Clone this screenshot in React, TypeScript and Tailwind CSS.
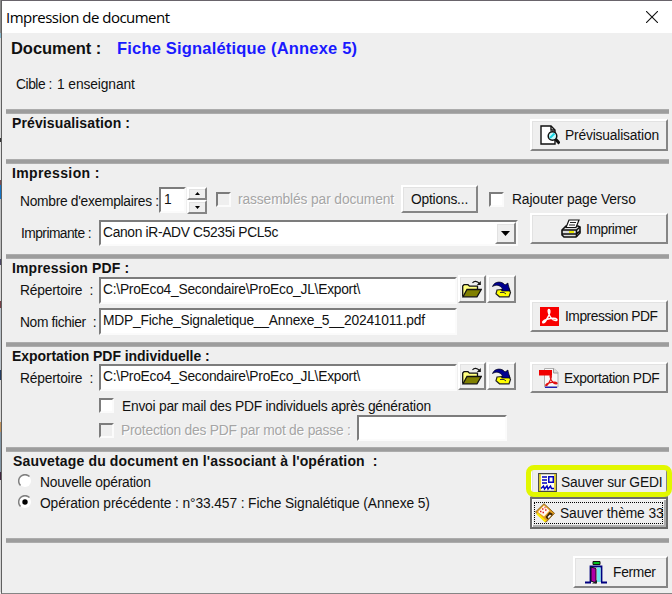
import type { ReactNode } from 'react';
import clsx from 'clsx';

const RAISED = 'border-2 border-t-white border-l-white border-r-[#858585] border-b-[#858585] bg-[#efefef] shadow-[inset_1px_1px_0_#e2e2e2]';
const SUNKEN = 'border-2 border-t-[#7c7c7c] border-l-[#7c7c7c] border-r-[#fbfbfb] border-b-[#fbfbfb]';

const PreviewIcon = () => (
    <svg className="h-5 w-5 shrink-0" viewBox="0 0 20 20">
        <path d="M1 1h10l4 4v14H1z" fill="#fff" stroke="#111" strokeWidth="1.4" />
        <path d="M11 1v4h4" fill="none" stroke="#111" strokeWidth="1.4" />
        <circle cx="12.500" cy="11" r="4.300" fill="#c8f8fa" stroke="#111" strokeWidth="1.500" />
        <path d="M10 13l4.500-4.500" stroke="#19d5e2" strokeWidth="2" />
        <path d="M15.500 14l4 4.500" stroke="#111" strokeWidth="3" />
    </svg>
);

const PrinterIcon = () => (
    <svg className="h-[19px] w-5 shrink-0" viewBox="0 0 20 19">
        <path d="M1 11l4-4h12l2 1v6L15 18H3l-2-2z" fill="#ddd" stroke="#111" strokeWidth="1.600" />
        <path d="M5 8.500L8 1h10l-3 7.500z" fill="#fff" stroke="#111" strokeWidth="1.200" />
        <path d="M9 3.500h6M8 6h6" stroke="#222" />
        <path d="M1 11h14.500l3.500-3M1 15h14.500l3.500-3M15.500 11v7" fill="none" stroke="#111" strokeWidth="1.600" />
        <path d="M8 13h5" stroke="#e8e800" strokeWidth="2" />
    </svg>
);

const AcrobatSwirl = ({ color }: { color: string }) => (
    <path
        d="M9 2.500c-1.500 0-.6 4 .8 6.500 1.600 2.900 4 4.600 6.200 4.500 2-.2.8-2.200-2.500-2.200-4 0-9.500 1.500-10.600 3.400-.7 1.400 1.200 1.700 2.700-.7C7.400 11.200 10.200 5.500 9.800 3.600 9.600 2.800 9.400 2.500 9 2.500z"
        fill="none"
        stroke={color}
        strokeWidth="1.500"
    />
);

const AcrobatIcon = () => (
    <svg className="h-[19px] w-[19px] shrink-0" viewBox="0 0 19 19">
        <path d="M0 0h19v19H0z" fill="#f80000" />
        <AcrobatSwirl color="#fff" />
    </svg>
);

const PdfFileIcon = () => (
    <svg className="h-5 w-5 shrink-0" viewBox="0 0 20 20">
        <path d="M5.500.5h9.500l4 4V19H5.500z" fill="#f8f8f8" stroke="#b0b0b0" />
        <path d="M14.500.5V5H19" fill="#ddd" stroke="#999" />
        <g transform="translate(4.500 5) scale(.8)">
            <AcrobatSwirl color="#e01010" />
        </g>
        <path d="M0 2h13v5.500H0z" fill="#f00000" />
        <path d="M6 19.300h12" stroke="#2020b0" strokeWidth="1.400" />
    </svg>
);

const FolderIcon = () => (
    <svg className="h-[18px] w-5" viewBox="0 0 20 18">
        <path d="M.7 16.500V6L2 4.700h4L7.500 6.200h8V9" fill="#ffff80" stroke="#111" strokeWidth="1.300" />
        <path d="M1 16.800L5 9.500h14.300L15 16.800z" fill="#808000" stroke="#111" strokeWidth="1.300" />
        <path d="M10.500 3C12 .8 15 .8 17.500 3.500" fill="none" stroke="#111" strokeWidth="1.200" />
        <path d="M18.800 1v4h-4z" fill="#111" />
    </svg>
);

const DefaultFolderIcon = () => (
    <svg className="h-[18px] w-5" viewBox="0 0 20 18">
        <path d="M5 10l12-1 1.500 3.500-1.500 4.300H7.500l-3.500-3z" fill="#ffff00" stroke="#222" strokeWidth="1.200" />
        <path d="M.5 6.500C2.500 1 10 .8 13 5l3-2v1l2 7H9.500L10.500 9C8 4.600 4 4.500.5 6.500z" fill="#000090" stroke="#001" strokeWidth=".7" />
        <path d="M8 12.500h4l2 1.500" fill="none" stroke="#333" />
    </svg>
);

const GediIcon = () => (
    <svg className="h-[19px] w-[19px] shrink-0" viewBox="0 0 19 19">
        <path d="M.7.7h17.600V18.300H.7z" fill="#fffff0" stroke="#444" strokeWidth="1.300" />
        <path d="M2 1v17M17 1v17" stroke="#e0c800" strokeWidth="1.500" />
        <path d="M4 4h5M4 7h5M4 10h5" stroke="#0000c0" strokeWidth="1.600" />
        <path d="M10.800 3.700h4.500v5.600h-4.500z" fill="none" stroke="#0000c0" strokeWidth="1.500" />
        <path d="M3 15.500l2.500-2.500 1 3 2.500-3 1 3 2.500-3 1 2.500h2.500" fill="none" stroke="#0000c0" strokeWidth="1.400" />
    </svg>
);

const DisketteIcon = () => (
    <svg className="h-5 w-5 shrink-0" viewBox="0 0 20 20">
        <path d="M.5 9L9 .7l10.500 9.600-8.500 9z" fill="#e8a020" stroke="#8b6420" />
        <path d="M3 9L9 2.500l5.500 5L9 13.500z" fill="#fff8f0" />
        <path d="M5 8.500h1.500m.5-2.500h1.500m1-1.500h1m-3 5h1.500m1-2.500h1.500" stroke="#e02020" strokeWidth="1.500" />
        <path d="M10.500 14l4-5 3.500 2-5.500 5.500z" fill="#3a2408" />
        <path d="M12.500 14l2.500-2.500 1.200 1-2.500 2.700z" fill="#f8f8f8" />
        <path d="M2 10.500l8.500 8" stroke="#ffee00" strokeWidth="2" />
    </svg>
);

const DoorIcon = () => (
    <svg className="h-[23px] w-[22px] shrink-0" viewBox="0 0 22 23">
        <path d="M8 .5h7v3H8z" fill="#00c020" stroke="#111" />
        <path d="M5.500 21V5.500h11V21" fill="#fff" stroke="#000080" strokeWidth="1.800" />
        <path d="M12 6.500h3.500V21H12z" fill="#70e8f0" />
        <path d="M6 6l5 1.500V22L6 20z" fill="#b000a8" stroke="#111" />
        <path d="M0 21.500h6M16 21.500h6" stroke="#000080" strokeWidth="2" />
        <path d="M7 22.500l5-3.500v3.500z" fill="#222" />
    </svg>
);

const Text = ({ className, children }: { className?: string; children: ReactNode }) => (
    <span className={clsx('block h-4 shrink-0 whitespace-pre pt-px text-[13.800px] leading-4', className)}>{children}</span>
);

const PushButton = ({ className, icon, children }: { className?: string; icon?: ReactNode; children: ReactNode }) => (
    <button className={clsx('flex shrink-0 items-center overflow-hidden', RAISED, className)}>
        {icon}
        {children}
    </button>
);

const Check = ({ className, disabled }: { className?: string; disabled?: boolean }) => (
    <span className={clsx('block h-[15px] w-[15px] shrink-0', SUNKEN, disabled ? 'bg-[#efefef]' : 'bg-white', className)} />
);

const Radio = ({ checked }: { checked?: boolean }) => (
    <svg className="h-[14px] w-[14px] shrink-0" viewBox="0 0 14 14">
        <circle cx="7" cy="7" r="6" fill="#fff" />
        <path d="M2.500 11.500A6.200 6.200 0 0 1 11.500 2.500" fill="none" stroke="#808080" strokeWidth="1.500" />
        {checked && <circle cx="7" cy="7" r="2.700" fill="#000" />}
    </svg>
);

const Field = ({ className, children }: { className?: string; children?: ReactNode }) => (
    <div className={clsx('flex h-[27px] shrink-0 bg-white', SUNKEN, className)}>{children}</div>
);

const FolderButtons = () => (
    <div className="ml-px flex gap-px">
        <button className={clsx('flex h-[28px] w-[28px] items-center justify-center', RAISED)}><FolderIcon /></button>
        <button className={clsx('flex h-[28px] w-[29px] items-center justify-center', RAISED)}><DefaultFolderIcon /></button>
    </div>
);

const Divider = () => <div className="ml-1 mr-[3px] h-[5px] shrink-0 border-y border-[#acacac] bg-[#9d9d9d]" />;

const Heading = ({ className, children }: { className?: string; children: ReactNode }) => (
    <h2 className={clsx('ml-[10px] whitespace-pre text-[14px] font-bold leading-4', className)}>{children}</h2>
);

const EDGE = [
    'h-[33px] bg-[#8a8a8a]', 'h-[5px] bg-[#86b6cc]', 'h-[100px] bg-[#d8d8d8]', 'h-[4px] bg-[#333]', 'h-[38px] bg-[#e2e2e2]',
    'h-[5px] bg-[#7a4c50]', 'h-[14px] bg-[#1674c4]', 'h-[60px] bg-[#bdbdbd]', 'h-[6px] bg-[#4e4966]', 'h-[36px] bg-[#d8d8d8]',
    'h-[7px] bg-[#743f45]', 'h-[62px] bg-[#b9c1c8]', 'h-[10px] bg-[#243d62]', 'h-[42px] bg-[#d8d8d8]', 'h-[10px] bg-[#c0925c]',
    'h-[40px] bg-[#8296a5]', 'h-[8px] bg-[#40263f]', 'h-[112px] bg-[#d5d5d5]',
];

const App = () => (
    <div className="flex h-[594px] w-[672px] overflow-hidden bg-[#efefef] font-['Liberation_Sans',Arial,sans-serif] text-[#111]">
        <div className="flex w-px shrink-0 flex-col">
            {EDGE.map((item, index) => <div key={index} className={clsx('shrink-0', item)} />)}
        </div>
        <div className="flex w-[671px] shrink-0 flex-col border-b border-l border-t border-b-[#858585] border-l-[#606060] border-t-[#69646b]">
            <header className="flex h-[32px] shrink-0 items-center bg-white pl-[4px]">
                <span className="-mt-px whitespace-nowrap font-['Open_Sans','Noto_Sans',sans-serif] text-[15px] leading-5 tracking-[-0.520px] text-black">Impression de document</span>
                <svg className="ml-auto mr-[14px] h-3 w-3" viewBox="0 0 12 12">
                    <path d="M0 0l12 12M12 0L0 12" stroke="#111" strokeWidth="1.100" />
                </svg>
            </header>

            <section className="h-[76px] shrink-0 pl-[9px] pt-[5px]">
                <div className="flex text-[16.500px] font-bold leading-5">
                    <span className="w-[106px] whitespace-pre tracking-[-0.050px]">Document :</span>
                    <span className="whitespace-pre tracking-[0.190px] text-[#1a1aff]">Fiche Signalétique (Annexe 5)</span>
                </div>
                <div className="mt-[18px] flex pl-[5px]">
                    <Text className="w-[41px] tracking-[-0.450px]">Cible :</Text>
                    <Text className="tracking-[-0.100px]">1 enseignant</Text>
                </div>
            </section>

            <Divider />
            <section className="flex h-[45px] shrink-0">
                <Heading className="w-[518px] pt-px tracking-[0.120px]">Prévisualisation :</Heading>
                <PushButton className="mt-[5px] h-[32px] w-[138px] pl-2" icon={<PreviewIcon />}>
                    <Text className="ml-[5px] tracking-[-0.170px]">Prévisualisation</Text>
                </PushButton>
            </section>

            <Divider />
            <section className="h-[90px] shrink-0">
                <Heading className="h-[21px] pt-px tracking-[0.380px]">Impression :</Heading>
                <div className="flex h-[28px]">
                    <Text className="ml-[18px] mt-2 w-[139px] tracking-[-0.290px]">Nombre d'exemplaires :</Text>
                    <Field className="h-[26px]! mt-[2px] w-[27px]"><Text className="ml-[3px] mt-[2px]">1</Text></Field>
                    <div className="ml-[1px] mt-[2px] w-[20px]">
                        <div className={clsx('flex h-[13px] items-center justify-center', RAISED)}>
                            <svg className="h-[3px] w-[5px]" viewBox="0 0 5 3"><path d="M0 3L2.500 0 5 3z" /></svg>
                        </div>
                        <div className={clsx('flex h-[14px] items-center justify-center', RAISED)}>
                            <svg className="h-[3px] w-[5px]" viewBox="0 0 5 3"><path d="M0 0l2.500 3L5 0z" /></svg>
                        </div>
                    </div>
                    <Check className="ml-[9px] mt-[7px]" disabled />
                    <Text className="ml-[7px] mt-[6px] w-[163px] tracking-[-0.120px] text-[#a5a5a5] text-shadow-[1px_1px_0_#fff]">rassemblés par document</Text>
                    <PushButton className="h-[28px] w-[77px] justify-center"><Text className="tracking-[-0.200px]">Options...</Text></PushButton>
                    <Check className="ml-[11px] mt-[7px]" />
                    <Text className="ml-[8px] mt-[6px] tracking-[-0.110px]">Rajouter page Verso</Text>
                </div>
                <div className="flex">
                    <Text className="ml-[19px] mt-[12px] w-[78px] tracking-[-0.550px]">Imprimante :</Text>
                    <Field className="h-[26px]! mt-[7px] w-[419px]">
                        <Text className="ml-[2px] mt-[2px] grow tracking-[-0.330px]">Canon iR-ADV C5235i PCL5c</Text>
                        <div className={clsx('flex w-[21px] items-center justify-center', RAISED)}>
                            <svg className="h-[5px] w-[9px]" viewBox="0 0 9 5"><path d="M0 0h9L4.500 5z" /></svg>
                        </div>
                    </Field>
                    <PushButton className="ml-[12px] h-[31px] w-[138px] pl-[29px]" icon={<PrinterIcon />}>
                        <Text className="ml-[5px] tracking-[-0.450px]">Imprimer</Text>
                    </PushButton>
                </div>
            </section>

            <Divider />
            <section className="flex h-[83px] shrink-0">
                <div className="w-[528px] shrink-0">
                    <Heading className="h-[16px] pt-px tracking-[0.130px]">Impression PDF :</Heading>
                    <div className="flex">
                        <Text className="ml-[18px] mt-[7px] w-[79px] tracking-[-0.210px]">Répertoire  :</Text>
                        <Field className="mt-[2px] w-[358px]"><Text className="ml-[2px] mt-[2px] tracking-[-0.250px]">C:\ProEco4_Secondaire\ProEco_JL\Export\</Text></Field>
                        <FolderButtons />
                    </div>
                    <div className="mt-[4px] flex">
                        <Text className="ml-[18px] mt-[6px] w-[79px] tracking-[-0.360px]">Nom fichier  :</Text>
                        <Field className="w-[358px]"><Text className="ml-[2px] mt-[2px] tracking-[-0.220px]">MDP_Fiche_Signaletique__Annexe_5__20241011.pdf</Text></Field>
                    </div>
                </div>
                <PushButton className="mt-[41px] h-[32px] w-[138px] pl-2" icon={<AcrobatIcon />}>
                    <Text className="ml-[6px] tracking-[-0.460px]">Impression PDF</Text>
                </PushButton>
            </section>

            <Divider />
            <section className="flex h-[100px] shrink-0">
                <div className="w-[528px] shrink-0">
                    <Heading className="h-[15px] pt-px tracking-[-0.050px]">Exportation PDF individuelle :</Heading>
                    <div className="flex">
                        <Text className="ml-[18px] mt-[8px] w-[79px] tracking-[-0.210px]">Répertoire  :</Text>
                        <Field className="mt-[2px] w-[358px]"><Text className="ml-[2px] mt-[2px] tracking-[-0.250px]">C:\ProEco4_Secondaire\ProEco_JL\Export\</Text></Field>
                        <FolderButtons />
                    </div>
                    <div className="ml-[97px] mt-[7px] flex">
                        <Check />
                        <Text className="ml-[8px] tracking-[-0.230px]">Envoi par mail des PDF individuels après génération</Text>
                    </div>
                    <div className="ml-[97px] mt-px flex">
                        <Check className="mt-[8px]" disabled />
                        <Text className="ml-[7px] mt-[7px] w-[236px] tracking-[-0.220px] text-[#a5a5a5] text-shadow-[1px_1px_0_#fff]">Protection des PDF par mot de passe :</Text>
                        <Field className="h-[26px]! w-[150px]" />
                    </div>
                </div>
                <PushButton className="mt-[15px] h-[31px] w-[138px] pl-[7px]" icon={<PdfFileIcon />}>
                    <Text className="ml-[5px] tracking-[-0.400px]">Exportation PDF</Text>
                </PushButton>
            </section>

            <Divider />
            <section className="flex h-[86px] shrink-0">
                <div className="w-[528px] shrink-0">
                    <Heading className="ml-[11px]! pt-px tracking-[0.150px]">Sauvetage du document en l'associant à l'opération  :</Heading>
                    <div className="ml-[16px] mt-[5px] flex">
                        <Radio /><Text className="ml-[8px] tracking-[-0.240px]">Nouvelle opération</Text>
                    </div>
                    <div className="ml-[16px] mt-[5px] flex">
                        <Radio checked /><Text className="ml-[8px] tracking-[-0.110px]">Opération précédente : n°33.457 : Fiche Signalétique (Annexe 5)</Text>
                    </div>
                </div>
                <div className="w-[138px] shrink-0 pt-[15px]">
                    <div className="relative">
                        <PushButton className="h-[30px] w-[138px] pl-[6px]" icon={<GediIcon />}>
                            <Text className="ml-[4px] tracking-[-0.200px]">Sauver sur GEDI</Text>
                        </PushButton>
                        <div className="absolute -left-1 -top-[2px] h-[32px] w-[146px] rounded-lg border-5 border-[#e2f700]" />
                    </div>
                    <button className="relative flex h-[32px] w-[138px] items-center overflow-hidden border-2 border-[#6c6c6c] bg-[#efefef] pl-[3px] shadow-[inset_1px_1px_0_#fff,inset_-2px_-2px_0_#b0b0b0]">
                        <DisketteIcon />
                        <Text className="ml-[5px] tracking-[-0.100px]">Sauver thème 33</Text>
                        <span className="absolute bottom-[3px] left-[2px] right-[3px] top-[3px] border border-dotted border-black" />
                    </button>
                </div>
            </section>

            <Divider />
            <footer className="flex shrink-0 pt-[13px]">
                <PushButton className="ml-[571px] h-[32px] w-[95px] pl-[10px]" icon={<DoorIcon />}>
                    <Text className="ml-[6px] tracking-[-0.300px]">Fermer</Text>
                </PushButton>
            </footer>
        </div>
    </div>
);

export default App;
